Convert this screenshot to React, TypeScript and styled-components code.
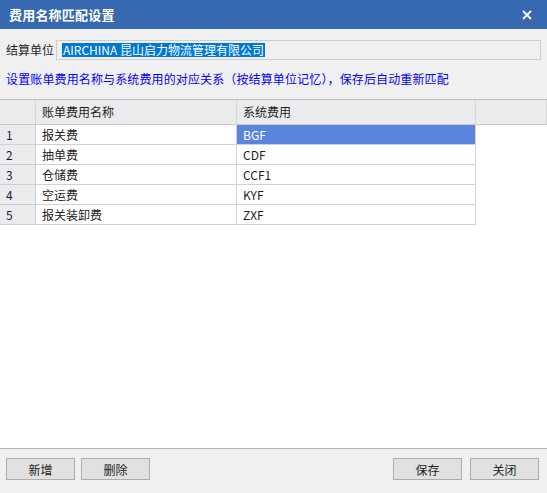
import styled, { createGlobalStyle } from 'styled-components';

const GlobalStyle = createGlobalStyle`
  html, body {
    margin: 0;
    padding: 0;
    background: #f0f0f0;
  }
  body {
    font-family: "Noto Sans CJK SC", "Liberation Sans", sans-serif;
    font-size: 12px;
    color: #1e1e1e;
  }
`;

const Dialog = styled.div`
  display: flex;
  flex-direction: column;
  width: 547px;
  height: 493px;
  background: #f0f0f0;
  overflow: hidden;
`;

const TitleBar = styled.div`
  display: flex;
  align-items: center;
  justify-content: space-between;
  height: 29px;
  padding: 0 12px 0 9px;
  background: #3669b0;
  color: #fff;
`;

const Title = styled.h1`
  margin: 0;
  font-size: 13px;
  font-weight: 700;
  letter-spacing: 0.2px;
`;

const CloseButton = styled.button`
  display: flex;
  align-items: center;
  justify-content: center;
  width: 16px;
  height: 16px;
  padding: 0;
  background: none;
  border: none;
  cursor: pointer;
`;

const Form = styled.div`
  display: flex;
  flex-direction: column;
  padding: 11px 6px 0 6px;
`;

const Field = styled.div`
  display: flex;
  align-items: center;
  gap: 2px;
  height: 20px;
`;

const Label = styled.span`
  line-height: 20px;
`;

const ReadOnlyInput = styled.div`
  flex: 1;
  height: 18px;
  display: flex;
  align-items: center;
  padding: 0 5px;
  border: 1px solid #cdcdcd;
  background: #f0f0f0;
`;

const Selected = styled.span`
  background: #0078d7;
  color: #fff;
  line-height: 14px;
  padding: 0 1px;
`;

const Hint = styled.p`
  margin: 9px 0 0 0;
  height: 20px;
  line-height: 20px;
  color: #0000ff;
  letter-spacing: 0.13px;
`;

const GridArea = styled.div`
  flex: 1;
  margin-top: 10px;
  background: #fff;
  border-top: 1px solid #bdbdbd;
  border-bottom: 1px solid #b4b4b4;
`;

const Grid = styled.div`
  display: grid;
  grid-template-columns: 36px 201px 239px 1fr;
`;

const HeaderCell = styled.div`
  height: 24px;
  line-height: 24px;
  padding-left: 6px;
  background: #eaebed;
  border-right: 1px solid #d6d6d6;
  border-bottom: 1px solid #cacaca;

  &:last-child {
    border-right: none;
  }
`;

const RowNum = styled.div`
  height: 19px;
  line-height: 19px;
  padding-left: 6px;
  background: #eaebed;
  color: #1a1a3a;
  border-right: 1px solid #d0d0d0;
  border-bottom: 1px solid #d0d0d0;
`;

const Cell = styled.div<{ $selected?: boolean }>`
  height: 19px;
  line-height: 19px;
  padding-left: 6px;
  background: ${(p) => (p.$selected ? '#5b84df' : '#fff')};
  color: ${(p) => (p.$selected ? '#fff' : '#1e1e1e')};
  border-right: 1px solid #d0d0d0;
  border-bottom: 1px solid #d0d0d0;
`;

const Filler = styled.div``;

const Footer = styled.div`
  display: flex;
  align-items: flex-start;
  justify-content: space-between;
  height: 44px;
  padding: 9px 8px 0 6px;
  box-sizing: border-box;
`;

const ButtonGroup = styled.div<{ $gap: number }>`
  display: flex;
  gap: ${(p) => p.$gap}px;
`;

const Button = styled.button`
  width: 69px;
  height: 22px;
  padding: 0;
  background: #e1e1e1;
  border: 1px solid #adadad;
  font: inherit;
  color: #1e1e1e;
  cursor: pointer;
`;

const rows = [
  { name: '报关费', code: 'BGF' },
  { name: '抽单费', code: 'CDF' },
  { name: '仓储费', code: 'CCF1' },
  { name: '空运费', code: 'KYF' },
  { name: '报关装卸费', code: 'ZXF' },
];

export default function App() {
  return (
    <Dialog>
      <GlobalStyle />
      <TitleBar>
        <Title>费用名称匹配设置</Title>
        <CloseButton type="button" aria-label="关闭">
          <svg width="10" height="10" viewBox="0 0 10 10">
            <path d="M1 1 L9 9 M9 1 L1 9" stroke="#fff" strokeWidth="1.8" />
          </svg>
        </CloseButton>
      </TitleBar>
      <Form>
        <Field>
          <Label>结算单位</Label>
          <ReadOnlyInput>
            <Selected>AIRCHINA 昆山启力物流管理有限公司</Selected>
          </ReadOnlyInput>
        </Field>
        <Hint>设置账单费用名称与系统费用的对应关系（按结算单位记忆），保存后自动重新匹配</Hint>
      </Form>
      <GridArea>
        <Grid>
          <HeaderCell />
          <HeaderCell>账单费用名称</HeaderCell>
          <HeaderCell>系统费用</HeaderCell>
          <HeaderCell />
          {rows.map((row, i) => (
            <>
              <RowNum key={`n${i}`}>{i + 1}</RowNum>
              <Cell key={`a${i}`}>{row.name}</Cell>
              <Cell key={`b${i}`} $selected={i === 0}>
                {row.code}
              </Cell>
              <Filler key={`f${i}`} />
            </>
          ))}
        </Grid>
      </GridArea>
      <Footer>
        <ButtonGroup $gap={6}>
          <Button type="button">新增</Button>
          <Button type="button">删除</Button>
        </ButtonGroup>
        <ButtonGroup $gap={8}>
          <Button type="button">保存</Button>
          <Button type="button">关闭</Button>
        </ButtonGroup>
      </Footer>
    </Dialog>
  );
}
